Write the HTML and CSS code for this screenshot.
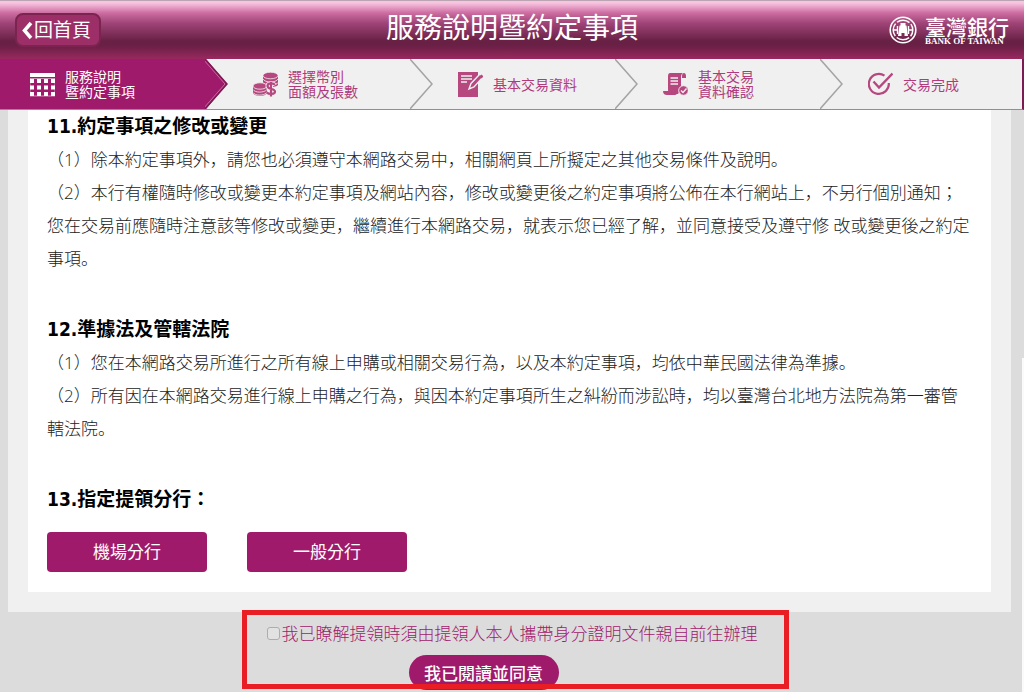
FILE: index.html
```html
<!DOCTYPE html>
<html lang="zh-Hant">
<head>
    <meta charset="UTF-8">
    <meta name="viewport" content="width=device-width, initial-scale=1.0">
    <title>服務說明暨約定事項</title>
    <link rel="stylesheet" href="styles.css">
</head>
<body>
    <header class="topbar">
        <a class="back" href="#">
            <svg width="11" height="19" viewBox="0 0 11 19"><path d="M9 2L2.500 9.500L9 17" fill="none" stroke="#fff" stroke-width="3.500"/></svg>
            <span>回首頁</span>
        </a>
        <h1>服務說明暨約定事項</h1>
        <div class="logo">
            <svg width="28" height="28" viewBox="0 0 28 28" fill="none" stroke="#fff">
                <circle cx="14" cy="14" r="12.800" stroke-width="1.600"/>
                <circle cx="14" cy="14" r="9.800" stroke-width="1.500" stroke-dasharray="13.400 2" stroke-dashoffset="6.700"/>
                <path d="M4 14h4M20 14h4M8.500 10v8M19.500 10v8" stroke-width="1.400"/>
                <path d="M11.500 7h5v2.500h1L19 20h-3.500v-3h-3v3H9l1.500-10.500h1z" fill="#fff" stroke="none"/>
            </svg>
            <div class="logo-text">
                <span class="logo-zh">臺灣銀行</span>
                <span class="logo-en">BANK OF TAIWAN</span>
            </div>
        </div>
    </header>

    <!-- Transaction steps -->
    <ol class="steps">
        <li class="step active">
            <svg class="icon" viewBox="0 0 25 25" fill="#fff">
                <path d="M0 1h25v4H0zM0 7h4v4H0zM7 7h4v4H7zM14 7h4v4h-4zM21 7h4v4h-4zM0 13.500h4v4H0zM7 13.500h4v4H7zM14 13.500h4v4h-4zM21 13.500h4v4h-4zM0 20h4v4H0zM7 20h4v4H7zM14 20h4v4h-4zM21 20h4v4h-4z"/>
                <path d="M0 6.500h25v17.500H0z" fill="none" stroke="#fff" stroke-width="1" opacity=".5"/>
            </svg>
            <span>服務說明<br>暨約定事項</span>
            <svg class="arrow" viewBox="0 0 23 50">
                <path d="M1 0H23V50H1L22 25z" fill="#f0f0f0"/>
                <path d="M0 0L22 25L0 50" fill="none" stroke="#7c1a52" stroke-width="1.500"/>
                <path d="M-2 0L20 25L-2 50" fill="none" stroke="#c76aa0" stroke-width="1"/>
            </svg>
        </li>
        <li class="step">
            <svg class="icon" viewBox="0 0 25 25" fill="#b6487f">
                <path d="M10 3v10c1 1.500 4 2 7.500 2S24 14.500 25 13V3z"/>
                <path d="M0 14v7c1 2 3.500 3 7 3s6-1 7-3v-7z"/>
                <g stroke="#f0f0f0" stroke-width=".8">
                    <ellipse cx="17.500" cy="3.500" rx="7.500" ry="3.300"/>
                    <path d="M10 7c2 4 13 4 15 0M10 10.500c2 4 13 4 15 0" fill="none"/>
                    <ellipse cx="7" cy="14" rx="7" ry="3.200"/>
                    <path d="M0 17.500c2 3.500 11 3.500 14 0M0 20.500c2 3.500 11 3.500 14 0" fill="none"/>
                </g>
                <path d="M22 12.800c-2-2-7.500-2-7.500 1.200 0 4 7.500 2 7.500 5.500 0 3-6 3-8.500.8M18 10v14.500" fill="none" stroke="#f0f0f0" stroke-width="4"/>
                <path d="M22 12.800c-2-2-7.500-2-7.500 1.200 0 4 7.500 2 7.500 5.500 0 3-6 3-8.500.8M18 10v14.500" fill="none" stroke="#b6487f" stroke-width="2.200"/>
            </svg>
            <span>選擇幣別<br>面額及張數</span>
            <svg class="arrow" viewBox="0 0 23 50"><path d="M0 0L22 25L0 50" fill="none" stroke="#a4a4a4" stroke-width="1.500"/></svg>
        </li>
        <li class="step">
            <svg class="icon" viewBox="0 0 25 25">
                <path d="M0 0h20v25H0z" fill="#b6487f"/>
                <path d="M3 4h11M3 7h11M3 10h6" stroke="#f0f0f0" stroke-width="1.300"/>
                <path d="M11 17l2-5.500L22 2l3 3-9 10z" fill="#b6487f" stroke="#f0f0f0" stroke-width="1.400"/>
                <path d="M22.500 3.500l2 2" stroke="#b6487f" stroke-width="3"/>
            </svg>
            <span>基本交易資料</span>
            <svg class="arrow" viewBox="0 0 23 50"><path d="M0 0L22 25L0 50" fill="none" stroke="#a4a4a4" stroke-width="1.500"/></svg>
        </li>
        <li class="step">
            <svg class="icon" viewBox="0 0 25 25" fill="#b6487f">
                <path d="M7 1h13c-2 1-2 3-2 5v11l-3 5H8c-2 0-3-2-3-4V4c0-2 1-3 2-3z"/>
                <path d="M19 6V4c0-4 4-4 4 0v2z"/>
                <path d="M0 19h11c0 2 1 3 3 4H4c-2 0-4-1-4-4z"/>
                <path d="M7.500 6h7.500M7.500 9h7.500M7.500 12h7.500" stroke="#f0f0f0" stroke-width="1.300"/>
                <circle cx="20.500" cy="18.500" r="4.800" stroke="#f0f0f0" stroke-width="1"/>
                <path d="M18 18.500l2 2 3.500-4" fill="none" stroke="#f0f0f0" stroke-width="1.400"/>
            </svg>
            <span>基本交易<br>資料確認</span>
            <svg class="arrow" viewBox="0 0 23 50"><path d="M0 0L22 25L0 50" fill="none" stroke="#a4a4a4" stroke-width="1.500"/></svg>
        </li>
        <li class="step">
            <svg class="icon" viewBox="0 0 25 25" fill="none" stroke="#b6487f">
                <path d="M16.500 3.700A10 10 0 1 0 20.800 11" stroke-width="2.200"/>
                <path d="M5.500 9.500l5.500 6L24.500 1.500" stroke-width="2.400"/>
            </svg>
            <span>交易完成</span>
        </li>
    </ol>

    <main class="panel">
        <div class="terms">
            <section>
                <h2>11.約定事項之修改或變更</h2>
                <p>（1）除本約定事項外，請您也必須遵守本網路交易中，相關網頁上所擬定之其他交易條件及說明。</p>
                <p>（2）本行有權隨時修改或變更本約定事項及網站內容，修改或變更後之約定事項將公佈在本行網站上，不另行個別通知；您在交易前應隨時注意該等修改或變更，繼續進行本網路交易，就表示您已經了解，並同意接受及遵守修 改或變更後之約定事項。</p>
            </section>
            <section>
                <h2>12.準據法及管轄法院</h2>
                <p>（1）您在本網路交易所進行之所有線上申購或相關交易行為，以及本約定事項，均依中華民國法律為準據。</p>
                <p>（2）所有因在本網路交易進行線上申購之行為，與因本約定事項所生之糾紛而涉訟時，均以臺灣台北地方法院為第一審管轄法院。</p>
            </section>
            <section>
                <h2>13.指定提領分行：</h2>
                <div class="branches">
                    <button type="button" class="branch">機場分行</button>
                    <button type="button" class="branch">一般分行</button>
                </div>
            </section>
        </div>
    </main>

    <form class="agree">
        <label class="agree-check" for="agree">
            <input type="checkbox" id="agree">
            <span>我已瞭解提領時須由提領人本人攜帶身分證明文件親自前往辦理</span>
        </label>
        <button type="button" class="agree-button">我已閱讀並同意</button>
    </form>
    <div class="edge"></div>
</body>
</html>
```

FILE: styles.css
```css
* {
    margin: 0;
    padding: 0;
    box-sizing: border-box;
}

body {
    min-height: 100vh;
    font-family: "Open Sans", "Noto Sans CJK JP", sans-serif;
    font-size: 17px;
    line-height: 33px;
    color: #222;
    background: #dcdcdc;
}

button {
    font-family: inherit;
    font-size: 17px;
    color: #fff;
    background: #a01a6b;
    border: none;
    cursor: pointer;
}

.topbar {
    display: grid;
    grid-template-columns: 1fr auto 1fr;
    align-items: center;
    height: 59px;
    padding: 0 15px;
    color: #fff;
    background: linear-gradient(#f8c4e0 2px, #cc6ca0 12px, #a04478 22px, #692045 40px, #6b2046 45px, #98295f 58px);
    border-top: 1px solid #bba5b3;
}

.topbar h1 {
    font-family: "Noto Sans CJK TC", sans-serif;
    font-size: 28px;
    font-weight: 400;
    line-height: 50px;
    padding-bottom: 8px;
}

.back {
    display: flex;
    align-items: center;
    justify-self: start;
    gap: 1px;
    height: 34px;
    padding: 0 8px 0 5px;
    font-size: 19px;
    color: #fff;
    text-decoration: none;
    background: #9c2f68;
    border: 2px solid #7c2450;
    border-radius: 8px;
}

.logo {
    display: flex;
    align-items: center;
    justify-self: end;
    gap: 8px;
}

.logo-text {
    display: flex;
    flex-direction: column;
}

.logo-zh {
    font-family: "Noto Sans CJK TC", sans-serif;
    font-size: 21px;
    font-weight: 500;
    line-height: 22px;
}

.logo-en {
    font-family: "Liberation Serif", serif;
    font-size: 9px;
    font-weight: 700;
    line-height: 9px;
}

.steps {
    display: grid;
    grid-template-columns: 228fr 205fr 205fr 205fr 179fr;
    list-style: none;
    height: 51px;
    background: #f0f0f0;
    border-right: 2px solid #7c1a52;
    border-bottom: 1px solid #909090;
}

.step {
    display: flex;
    align-items: center;
    gap: 10px;
    padding-left: 25px;
    font-family: "Noto Sans CJK TC", sans-serif;
    font-size: 14px;
    line-height: 15px;
    color: #b03a7b;
}

.step.active {
    padding-left: 30px;
    color: #fff;
    background: #a01a6b;
}

.icon {
    flex: none;
    width: 25px;
    height: 25px;
}

.arrow {
    flex: none;
    width: 23px;
    height: 50px;
    margin-left: auto;
}

.panel {
    margin: 0 13px 0 8px;
    padding: 0 20px 20px;
    background: #f0f0f0;
}

.terms {
    display: flex;
    flex-direction: column;
    gap: 38px;
    padding: 0 19px 20px;
    background: #fff;
    font-feature-settings: "locl" 0;
}

.terms h2 {
    font-family: "DejaVu Sans Condensed", "Noto Sans CJK JP", sans-serif;
    font-size: 19px;
    line-height: 33px;
    color: #000;
}

.terms p {
    font-weight: 300;
}

.branches {
    display: flex;
    gap: 40px;
    margin-top: 16px;
}

.branch {
    width: 160px;
    height: 40px;
    padding-bottom: 4px;
    border-radius: 4px;
}

/* Consent box, the red frame lies over the button */
.agree {
    position: relative;
    display: flex;
    flex-direction: column;
    align-items: flex-start;
    gap: 5px;
    width: 547px;
    height: 79px;
    margin: -2px auto 0;
    left: 3px;
    padding: 7px 0 0 25px;
}

.agree::after {
    content: "";
    position: absolute;
    inset: 0;
    border: 5px solid #e91e25;
    pointer-events: none;
}

.agree-check {
    display: flex;
    align-items: center;
    gap: 2px;
    font-weight: 300;
    color: #a01a6b;
}

.agree-check input {
    appearance: none;
    width: 13px;
    height: 13px;
    background: #e2e2e2;
    border: 1px solid #adadad;
    border-radius: 3px;
}

.agree-check input:checked {
    background: #a01a6b;
}

.agree-button {
    flex: none;
    width: 150px;
    height: 35px;
    margin-left: 142px;
    font-weight: 500;
    border-radius: 18px;
}

/* Light strip along the lower right side of the window */
.edge {
    position: fixed;
    top: 358px;
    right: 0;
    bottom: 0;
    width: 2px;
    background: #fafafa;
}
```
